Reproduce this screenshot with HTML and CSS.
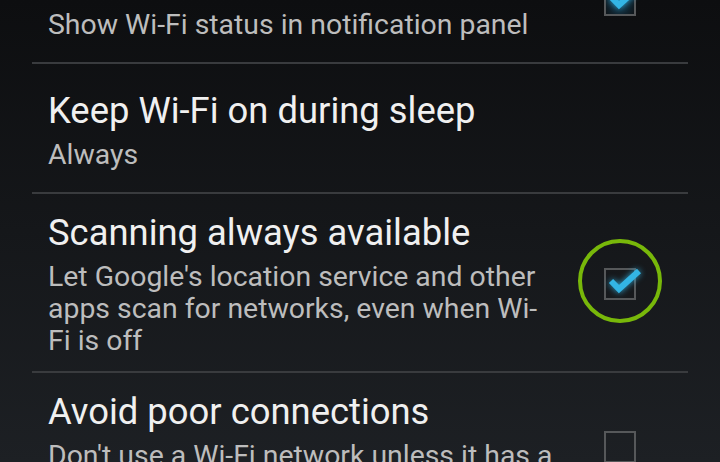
FILE: index.html
```html
<!DOCTYPE html>
<html lang="en">
<head>
  <meta charset="UTF-8">
  <meta name="viewport" content="width=device-width, initial-scale=1.0">
  <title>Wi-Fi advanced</title>
  <link rel="stylesheet" href="styles.css">
</head>
<body>
  <div class="prefs">
    <div class="pref">
      <div class="pref-text">
        <div class="pref-title">Network notification</div>
        <div class="pref-summary">Show Wi-Fi status in notification panel</div>
      </div>
      <div class="pref-widget">
        <span class="check checked pressed">
          <svg viewBox="0 0 32 32" width="32" height="32"><polyline points="7,13 15,21 35,3"/></svg>
        </span>
      </div>
    </div>

    <div class="pref">
      <div class="pref-text">
        <div class="pref-title">Keep Wi-Fi on during sleep</div>
        <div class="pref-summary">Always</div>
      </div>
    </div>

    <div class="pref">
      <div class="pref-text">
        <div class="pref-title">Scanning always available</div>
        <div class="pref-summary">Let Google's location service and other apps scan for networks, even when Wi-Fi is off</div>
      </div>
      <div class="pref-widget">
        <span class="check checked">
          <svg viewBox="0 0 32 32" width="32" height="32"><polyline points="7,13 15,21 35,3"/></svg>
        </span>
        <span class="ring"></span>
      </div>
    </div>

    <div class="pref">
      <div class="pref-text">
        <div class="pref-title">Avoid poor connections</div>
        <div class="pref-summary">Don't use a Wi-Fi network unless it has a good Internet connection</div>
      </div>
      <div class="pref-widget">
        <span class="check"></span>
      </div>
    </div>
  </div>
</body>
</html>
```

FILE: styles.css
```css
body {
  margin: 0;
  height: 100vh;
  overflow: hidden;
  background: linear-gradient(#0d0e10, #1d2024);
  font-family: Roboto, "Noto Sans", sans-serif;
}

/* list is scrolled so the first item is cut at the top */
.prefs {
  margin: -66px 32px 0;
}

.pref {
  display: flex;
  align-items: center;
  min-height: 130px;
  box-sizing: border-box;
  padding: 17px 0 14px 16px;
  border-bottom: 2px solid #393b3e;
}

.pref-text {
  flex: 1;
  min-width: 0;
}

.pref-title {
  color: #f0f0f0;
  font-size: 36.4px;
  line-height: 44px;
}

.pref-summary {
  margin-top: 6px;
  color: #bdbdbd;
  font-size: 28.4px;
  line-height: 32px;
}

.pref-widget {
  position: relative;
  flex: none;
  width: 32px;
  height: 32px;
  margin: 0 52px 0 50px;
}

.check {
  display: block;
  width: 32px;
  height: 32px;
  box-sizing: border-box;
  border: 2px solid #56585a;
}

.check svg {
  display: block;
  margin: -2px;
  overflow: visible;
  filter: drop-shadow(0 0 3px rgba(51, 181, 229, 0.9));
}

.check polyline {
  fill: none;
  stroke: #33b5e5;
  stroke-width: 6;
}

.check.pressed {
  background: radial-gradient(ellipse at 50% 0%, #1e6e96 0%, #123447 45%, #0f1418 100%);
}

/* highlight ring drawn over the checkbox */
.ring {
  position: absolute;
  left: -26px;
  top: -29px;
  width: 84px;
  height: 84px;
  box-sizing: border-box;
  border: 4px solid #78b80a;
  border-radius: 50%;
}
```
